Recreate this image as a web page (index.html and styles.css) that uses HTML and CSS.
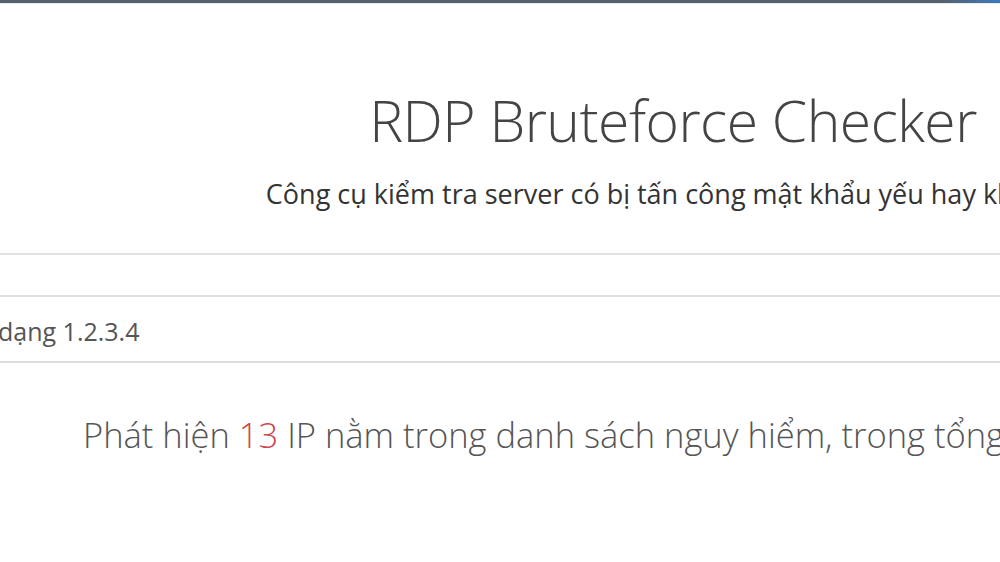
FILE: index.html
```html
<!DOCTYPE html>
<html lang="vi">
<head>
<meta charset="utf-8">
<title>RDP Bruteforce Checker</title>
<link rel="stylesheet" href="styles.css">
</head>
<body>
<div class="topbar"></div>
<div class="page">
  <header class="header">
    <h1 class="title">RDP Bruteforce Checker</h1>
    <p class="subtitle">Công cụ kiểm tra server có bị tấn công mật khẩu yếu hay không</p>
  </header>
  <div class="form">
    <div class="field"><span class="placeholder">dạng 1.2.3.4</span></div>
  </div>
  <p class="result">Phát hiện <span class="count">13</span> IP nằm trong danh sách nguy hiểm, trong tổng số IP đã kiểm tra</p>
</div>
</body>
</html>
```
FILE: styles.css
```css
html, body {
  margin: 0;
  padding: 0;
  background: #ffffff;
  overflow: hidden;
}
body {
  width: 1000px;
  height: 562px;
  font-family: "Open Sans", "Liberation Sans", sans-serif;
  color: #333;
}
.topbar {
  height: 3px;
  background: linear-gradient(to right, #56606c 0%, #56606c 94%, #3f79b8 100%);
  border-bottom: 1px solid #e3eef2;
}
.page {
  width: 1346px;
}
.header {
  text-align: center;
  padding-top: 76px;
  padding-bottom: 42px;
  border-bottom: 2px solid #e2e2e2;
}
.title {
  margin: 0;
  font-weight: 300;
  font-size: 57px;
  line-height: 80px;
  color: #444;
  letter-spacing: -0.5px;
}
.subtitle {
  margin: 0;
  margin-top: 17px;
  padding-right: 19px;
  font-size: 27px;
  line-height: 34px;
  color: #333;
  white-space: nowrap;
}
.form {
  padding-top: 40px;
}
.field {
  border-top: 2px solid #e0e0e0;
  border-bottom: 2px solid #dcdcdc;
  display: flex;
  align-items: center;
  box-sizing: border-box;
  height: 68px;
  padding-top: 4px;
}
.placeholder {
  margin-left: -2px;
  font-size: 25px;
  color: #555;
}
.result {
  margin: 0;
  padding-top: 49px;
  padding-left: 83px;
  font-size: 34.5px;
  line-height: 46px;
  color: #555;
  font-weight: 300;
  white-space: nowrap;
}
.count {
  color: #d0454a;
}
```
